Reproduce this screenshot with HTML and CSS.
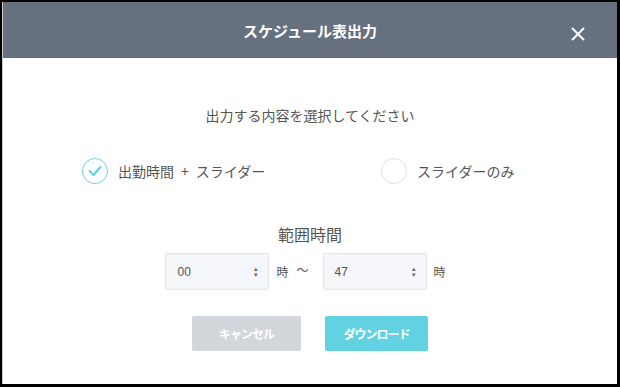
FILE: index.html
```html
<!DOCTYPE html>
<html lang="ja">
<head>
    <meta charset="UTF-8">
    <title>スケジュール表出力</title>
    <link rel="stylesheet" href="styles.css">
</head>
<body>
    <div class="modal">
        <div class="modal-header">
            <h2>スケジュール表出力</h2>
            <span class="close">
                <svg width="14" height="14" viewBox="0 0 14 14"><path d="M1 1 L13 13 M13 1 L1 13" stroke="#fff" stroke-width="2" fill="none"/></svg>
            </span>
        </div>
        <div class="modal-body">
            <p class="lead">出力する内容を選択してください</p>
            <div class="options">
                <label class="option">
                    <span class="radio checked">
                        <svg width="14" height="12" viewBox="0 0 14 12"><path d="M1.5 6 L5.5 10 L12.5 2" stroke="#5fd0e0" stroke-width="2" fill="none" stroke-linecap="round" stroke-linejoin="round"/></svg>
                    </span>
                    <span>出勤時間<span class="plus">+</span>スライダー</span>
                </label>
                <label class="option">
                    <span class="radio"></span>
                    スライダーのみ
                </label>
            </div>
            <p class="range-title">範囲時間</p>
            <div class="range">
                <div class="select"><span>00</span><span class="arrows">&#x25B4;<br>&#x25BE;</span></div>
                <span class="unit">時</span>
                <span class="tilde">～</span>
                <div class="select"><span>47</span><span class="arrows">&#x25B4;<br>&#x25BE;</span></div>
                <span class="unit">時</span>
            </div>
            <div class="buttons">
                <button class="btn cancel">キャンセル</button>
                <button class="btn download">ダウンロード</button>
            </div>
        </div>
    </div>
</body>
</html>
```

FILE: styles.css
```css
html, body { margin: 0; height: 100%; }
body { background: #000; padding: 2px 3px 3px 2px; box-sizing: border-box; font-family: "Noto Sans CJK JP", "Noto Sans", sans-serif; color: #555; }
.modal { background: #fff; height: 100%; border-left: 1px solid #c8cbd0; box-sizing: border-box; }
.modal-header { background: #66707f; height: 56px; display: flex; align-items: center; justify-content: center; position: relative; }
.modal-header h2 { margin: 0; color: #fff; font-size: 15px; font-weight: bold; }
.close { position: absolute; right: 32px; top: 20px; width: 14px; height: 14px; }
.modal-body { text-align: center; }
.lead { margin: 46px 0 0; font-size: 14px; line-height: 22px; }
.options { display: flex; margin-top: 32px; padding-left: 79px; }
.option { display: flex; align-items: center; gap: 10px; font-size: 14px; }
.option:first-child { width: 299px; }
.plus { margin: 0 7px; }
.radio { width: 24px; height: 24px; border: 1px solid #e2e2e2; border-radius: 50%; display: flex; align-items: center; justify-content: center; }
.radio.checked { border-color: #6fd4e3; }
.range-title { margin: 39px 0 0; font-size: 16px; line-height: 22px; }
.range { display: flex; justify-content: center; align-items: center; margin-top: 8px; padding-right: 9px; }
.select { height: 35px; background: #f5f6fa; border: 1px solid #e3e5ec; border-radius: 2px; display: flex; align-items: center; justify-content: space-between; padding: 0 10px 0 11px; width: 81px; font-family: "Liberation Sans", Arial, sans-serif; font-size: 12px; color: #555; }
.arrows { font-size: 7px; line-height: 6px; color: #666; }
.unit { font-size: 12px; margin-left: 7px; }
.tilde { font-size: 12px; margin: 0 14px 5px 8px; }
.buttons { display: flex; justify-content: center; gap: 24px; margin-top: 26px; }
.btn { border: none; border-radius: 2px; height: 35px; color: #fff; font-family: "Noto Sans CJK JP", sans-serif; font-weight: bold; font-size: 12px; letter-spacing: -1px; }
.cancel { background: #d3d6da; width: 109px; }
.download { background: #62d2e3; width: 103px; }
```
